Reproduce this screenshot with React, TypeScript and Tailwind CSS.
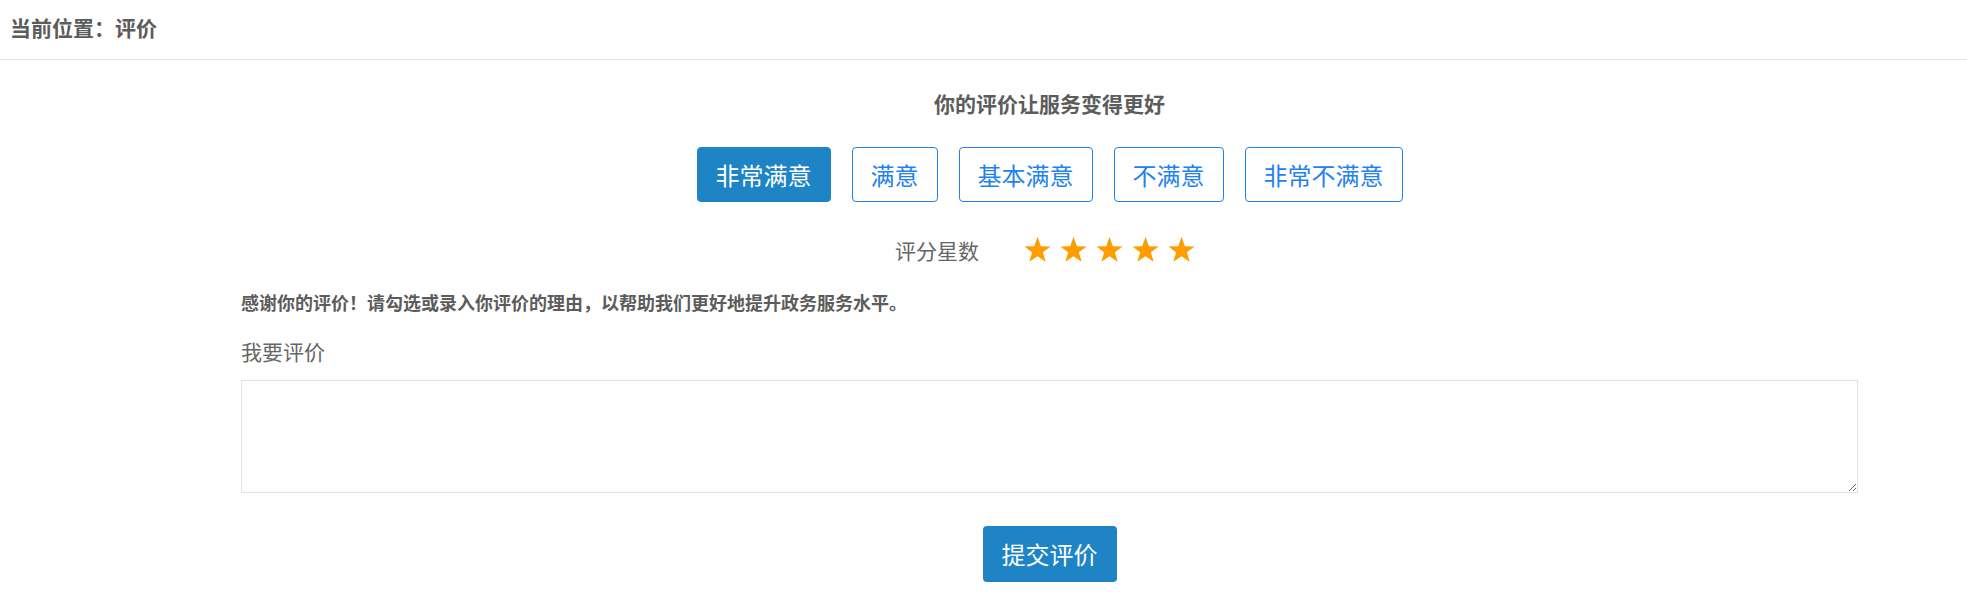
import React from "react";

const Star = () => (
  <svg width="29" height="28" viewBox="0 0 24 23" className="block">
    <path
      d="M12 0.6 L14.75 8.3 L22.9 8.5 L16.45 13.45 L18.75 21.3 L12 16.7 L5.25 21.3 L7.55 13.45 L1.1 8.5 L9.25 8.3 Z"
      fill="#ff9c00"
    />
  </svg>
);

const options = ["非常满意", "满意", "基本满意", "不满意", "非常不满意"];

export default function App() {
  return (
    <div className="w-[1967px] h-[609px] bg-white font-['Noto_Sans_CJK_SC','Noto_Sans',sans-serif] text-[#666] overflow-hidden">
      <div className="h-[60px] border-b border-[#e6e6e6] pl-[10px] pt-[16px]">
        <div className="text-[21px] leading-[22px] font-bold text-[#5c5c5c]">当前位置：评价</div>
      </div>
      <div className="pl-[241px] pr-[109px]">
        <div className="mt-[28px] text-center text-[21px] leading-[30px] font-bold text-[#5c5c5c]">
          你的评价让服务变得更好
        </div>
        <div className="mt-[29px] flex justify-center gap-[21px]">
          {options.map((o, i) => (
            <button
              key={o}
              className={
                i === 0
                  ? "h-[55px] px-[18px] rounded-[4px] border border-[#1e84c6] bg-[#1e84c6] text-white text-[24px] leading-[24px]"
                  : "h-[55px] px-[18px] rounded-[4px] border border-[#1f82f2] bg-white text-[#1f82f2] text-[24px] leading-[24px]"
              }
            >
              {o}
            </button>
          ))}
        </div>
        <div className="mt-[33px] h-[30px] flex items-center justify-center pr-[8px]">
          <span className="text-[21px] leading-[30px] text-[#666]">评分星数</span>
          <div className="ml-[44px] flex gap-[7px]">
            <Star />
            <Star />
            <Star />
            <Star />
            <Star />
          </div>
        </div>
        <div className="mt-[25px] text-[18px] leading-[24px] font-bold text-[#5c5c5c]">
          感谢你的评价！请勾选或录入你评价的理由，以帮助我们更好地提升政务服务水平。
        </div>
        <div className="mt-[22px] text-[21px] leading-[30px] text-[#666]">我要评价</div>
        <textarea className="mt-[14px] block w-full h-[113px] border border-[#e3e3e3] bg-white outline-none" />
        <div className="mt-[33px] flex justify-center">
          <button className="w-[134px] h-[56px] rounded-[4px] bg-[#1e84c6] text-white text-[24px] leading-[24px]">
            提交评价
          </button>
        </div>
      </div>
    </div>
  );
}
